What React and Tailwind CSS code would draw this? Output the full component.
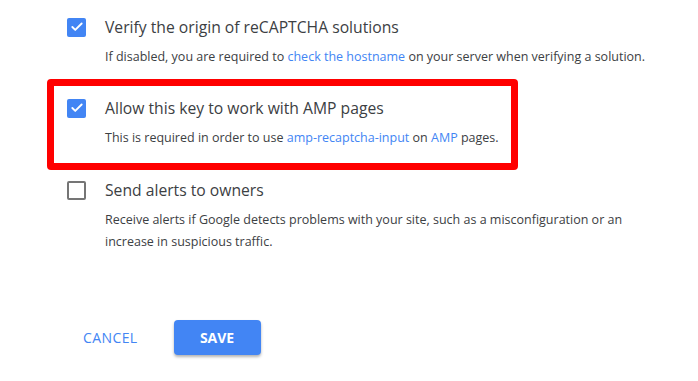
import { Check } from "lucide-react";

function Box({ checked }) {
    if (checked) {
        return (
            <div className="w-[19px] h-[19px] shrink-0 rounded-[2px] bg-[#4285f4] flex items-center justify-center">
                <Check className="w-[14px] h-[14px] text-white" strokeWidth={3.2} />
            </div>
        );
    }
    return <div className="w-[19px] h-[19px] shrink-0 rounded-[2px] border-2 border-[#757575]" />;
}

function Option({ checked, title, children }) {
    return (
        <div className="flex gap-[19px]">
            <div className="h-[20px] flex items-center">
                <Box checked={checked} />
            </div>
            <div className="flex-1">
                <div className="h-[20px] leading-[20px] text-[15.7px] text-[#3c4043]">{title}</div>
                <div className="mt-[9px] text-[12.5px] leading-[22px] text-[#3c4043]">{children}</div>
            </div>
        </div>
    );
}

export default function App() {
    return (
        <div className="w-[698px] h-[381px] bg-white overflow-hidden font-['Open_Sans',sans-serif]">
            <div className="pl-[47px] pt-[17px]">
                <div className="pl-[20px] w-[615px]">
                    <Option checked title="Verify the origin of reCAPTCHA solutions">
                        If disabled, you are required to{" "}
                        <span className="text-[#4285f4]">check the hostname</span> on your server when verifying a
                        solution.
                    </Option>
                </div>

                {/* highlighted option */}
                <div className="mt-[11px] w-[471px] border-[7px] border-[#ff0000] rounded-[4px] pl-[13px] pt-[12px] pb-[14px]">
                    <Option checked title="Allow this key to work with AMP pages">
                        This is required in order to use{" "}
                        <span className="text-[#4285f4]">amp-recaptcha-input</span> on{" "}
                        <span className="text-[#4285f4]">AMP</span> pages.
                    </Option>
                </div>

                <div className="pl-[20px] mt-[10px] w-[615px]">
                    <Option checked={false} title="Send alerts to owners">
                        Receive alerts if Google detects problems with your site, such as a misconfiguration or an
                        increase in suspicious traffic.
                    </Option>
                </div>

                <div className="mt-[67px] pl-[20px] flex items-center gap-[20px]">
                    <button className="h-[35px] px-4 text-[14px] font-medium tracking-[0.4px] text-[#4285f4]">
                        CANCEL
                    </button>
                    <button className="h-[35px] w-[87px] rounded-[4px] bg-[#4285f4] text-white text-[14px] font-bold shadow-[0_2px_3px_rgba(0,0,0,0.3)]">
                        SAVE
                    </button>
                </div>
            </div>
        </div>
    );
}
